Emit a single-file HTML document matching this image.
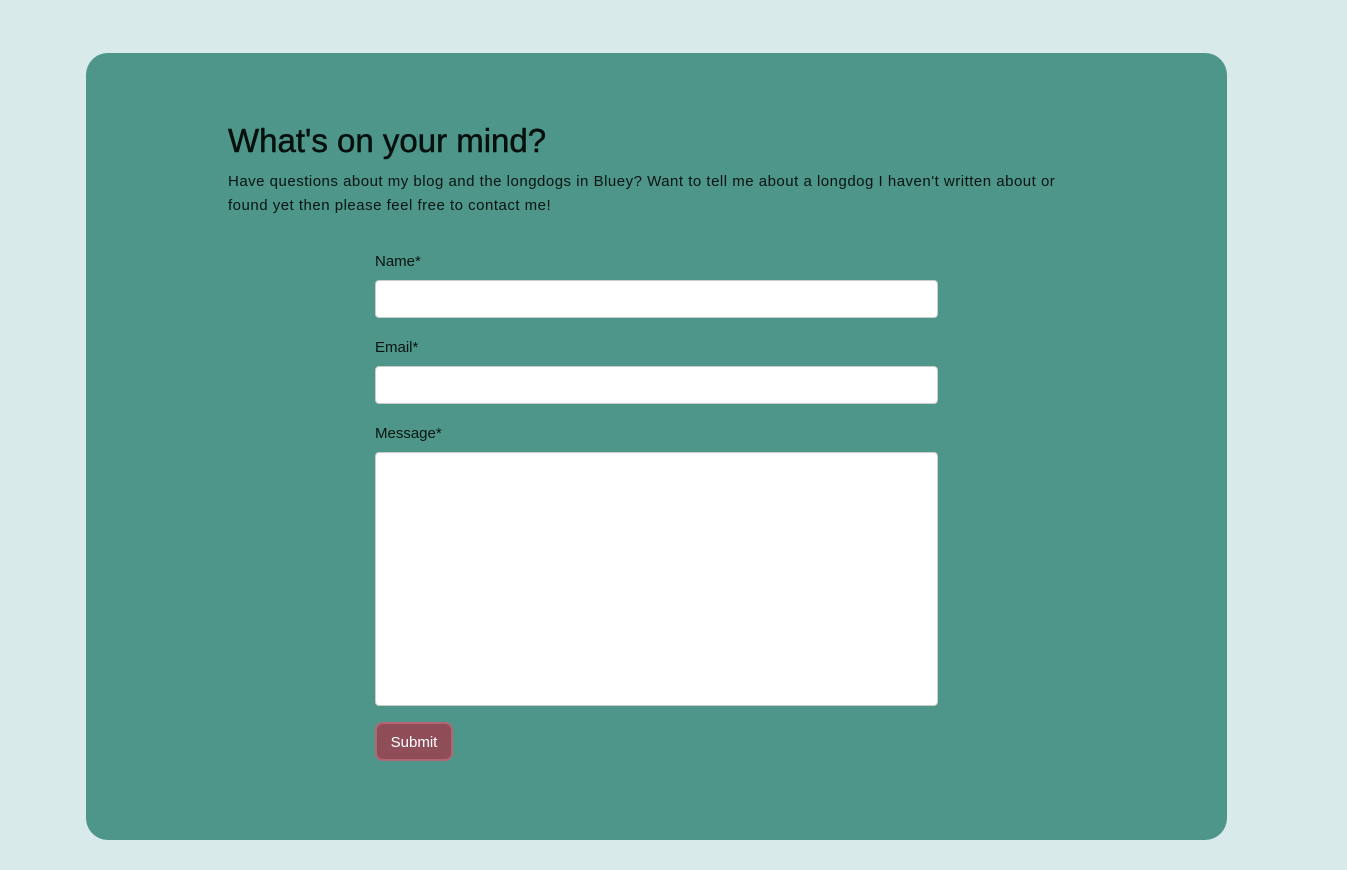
<!DOCTYPE html>
<html><head><style>
html,body{margin:0;padding:0;background:#d9eaea;width:1347px;height:870px;overflow:hidden;font-family:"Liberation Sans",sans-serif;}
.card{position:absolute;left:86px;top:53px;width:1141px;height:787px;background:#4e968a;border-radius:22px;}
h1{position:absolute;left:228px;top:122px;margin:0;font-size:33px;font-weight:normal;color:#050f0c;-webkit-text-stroke:0.5px #050f0c;}
p{position:absolute;left:228px;top:170px;margin:0;font-size:15px;line-height:24px;color:#08140f;width:900px;letter-spacing:0.5px;}
.lbl{position:absolute;left:375px;font-size:15px;color:#08140f;}
.inp{position:absolute;left:375px;width:561px;background:#fff;border:1px solid #ccc;border-radius:4px;}
.btn{position:absolute;left:375px;top:722px;width:78px;height:39px;background:#8f4d58;border:2px solid #b56473;border-radius:8px;box-sizing:border-box;color:#fff;font-size:15px;text-align:center;line-height:37px;}
</style></head><body>
<div class="card"></div>
<h1>What's on your mind?</h1>
<p>Have questions about my blog and the longdogs in Bluey? Want to tell me about a longdog I haven't written about or<br>found yet then please feel free to contact me!</p>
<div class="lbl" style="top:253px">Name*</div>
<div class="inp" style="top:280px;height:36px"></div>
<div class="lbl" style="top:339px">Email*</div>
<div class="inp" style="top:366px;height:36px"></div>
<div class="lbl" style="top:425px">Message*</div>
<div class="inp" style="top:452px;height:252px"></div>
<div class="btn">Submit</div>
</body></html>
